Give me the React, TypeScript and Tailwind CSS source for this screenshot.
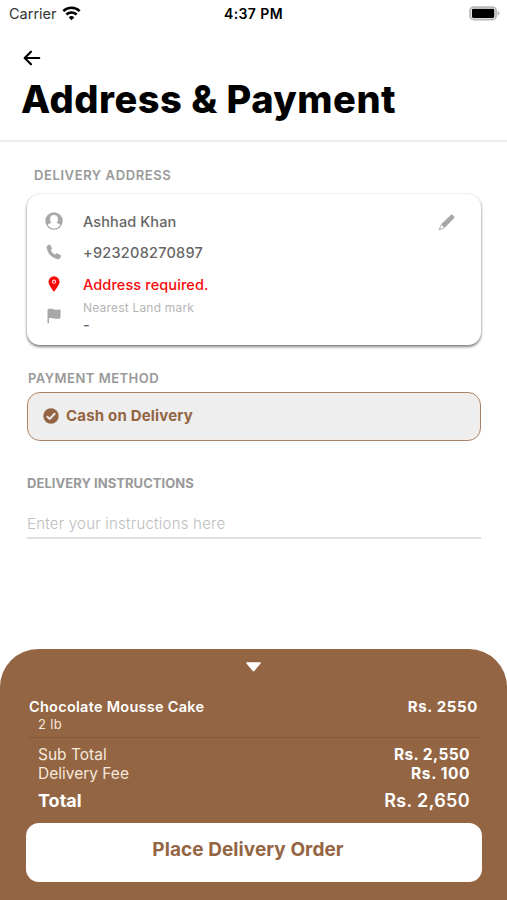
import React from "react";

function WifiIcon() {
  return (
    <svg width="19" height="15" viewBox="0 0 19 15" fill="none" stroke="#000" strokeWidth="2.5">
      <path d="M1.3 5.200a11.6 11.6 0 0 1 16.4 0" />
      <path d="M4.4 8.500a7.2 7.2 0 0 1 10.2 0" />
      <path d="M9.5 14.2 6.700 11.300a4 4 0 0 1 5.600 0z" fill="#000" stroke="none" />
    </svg>
  );
}

function BatteryIcon() {
  return (
    <svg width="31" height="15" viewBox="0 0 31 15">
      <rect x="1.100" y="1.100" width="26" height="12.400" rx="3.600" fill="#fff" stroke="#b8b8b8" strokeWidth="1.800" />
      <rect x="2.900" y="2.700" width="22.400" height="9.200" rx="1.400" fill="#000" />
      <path d="M28.600 5.100c1.400.5 1.900 1.300 1.900 2.200s-.5 1.700-1.900 2.200z" fill="#b5b5b5" />
    </svg>
  );
}

function BackIcon() {
  return (
    <svg width="18" height="16" viewBox="0 0 18 16" fill="none" stroke="#000" strokeWidth="2.200" strokeLinecap="round" strokeLinejoin="round">
      <path d="M8 1.700 1.700 8 8 14.300M2 8h14.200" />
    </svg>
  );
}

function ContactIcon() {
  return (
    <svg width="18" height="18" viewBox="0 0 18 18">
      <circle cx="9" cy="9" r="8.700" fill="#a8a8a8" />
      <ellipse cx="9" cy="7.300" rx="3.900" ry="4.300" fill="#fff" />
      <path d="M2.700 13c1.200-1.400 2.800-1.700 4.300-2.400h4c1.500.7 3.100 1 4.300 2.400A7.400 7.400 0 0 1 9 16.400 7.400 7.400 0 0 1 2.700 13z" fill="#fff" />
    </svg>
  );
}

function PhoneIcon() {
  return (
    <svg width="16" height="16" viewBox="0 0 16 16" fill="#a8a8a8">
      <path d="M1.100 1.900 3.100.6c.5-.3 1.100-.1 1.300.4l1.500 3.100c.2.500.1.900-.3 1.300l-.9.900c1 1.900 2.400 3.300 4.300 4.300l.9-.9c.4-.4.8-.5 1.300-.3l3.300 1.500c.5.300.8.900.5 1.400L14 14.600c-.3.500-.8.800-1.300.7C6.300 14.700 1.300 9.600.6 3.300c-.1-.6.100-1.100.5-1.400z" />
    </svg>
  );
}

function PinIcon() {
  return (
    <svg width="12" height="16" viewBox="0 0 12 16">
      <path d="M6 .3A5.500 5.500 0 0 0 .5 5.800C.5 9.500 6 15.700 6 15.700s5.500-6.200 5.500-9.900A5.500 5.500 0 0 0 6 .3z" fill="#f80808" />
      <circle cx="6" cy="5.700" r="1.600" fill="none" stroke="#ffd5d5" strokeWidth="1.100" />
    </svg>
  );
}

function FlagIcon() {
  return (
    <svg width="14" height="16" viewBox="0 0 14 16" fill="#a8a8a8">
      <path d="M.5 15.300V1.200C3 .2 4.800.6 7 1.400c2.200.7 4 .5 6.500-.1v8.900c-2.500.8-4.400.8-6.500.2-2-.6-3.500-.7-5-.2v5.100z" />
    </svg>
  );
}

function PencilIcon() {
  return (
    <svg width="17" height="17" viewBox="0 0 17 17" fill="#a8a8a8">
      <path d="M12.700.9c.6-.6 1.300-.6 1.900 0l1.500 1.500c.6.600.6 1.200 0 1.800L6.500 13.900 2.900 10.400z" />
      <path d="M2.500 11 .6 16.300 6 14.400l-.8-.6-2.200 1-.8-.9 1-2.100z" />
    </svg>
  );
}

function CheckIcon() {
  return (
    <svg width="16" height="16" viewBox="0 0 16 16" fill="none">
      <circle cx="8" cy="8" r="7.700" fill="#936543" />
      <path d="m3.800 8.200 2.900 2.700 5.400-5.600" stroke="#eee" strokeWidth="2" />
    </svg>
  );
}

function ContactRow({ icon, className, children }: { icon: React.ReactNode; className: string; children: React.ReactNode }) {
  return (
    <div className={`flex items-center ${className}`}>
      <span className="flex w-[38px] shrink-0 justify-start pb-px">
        <span className="flex w-[18px] justify-center">{icon}</span>
      </span>
      {children}
    </div>
  );
}

export default function App() {
  return (
    <main className="flex h-[900px] w-[507px] flex-col overflow-hidden whitespace-nowrap bg-white font-['Inter','Liberation_Sans',sans-serif]">
      <header className="h-[142px] shrink-0 border-b-2 border-[#ececec]">
        <div className="grid h-[28px] grid-cols-3 items-center pl-[9px] pr-[7px]">
          <div className="flex items-center gap-[5px] text-[14.5px] text-[#333]">
            <span>Carrier</span>
            <span className="-mt-[2px]"><WifiIcon /></span>
          </div>
          <span className="pb-[2px] pr-[2px] text-center text-[14px] font-semibold tracking-[0.4px]">4:37 PM</span>
          <span className="-mt-[2px] flex justify-end"><BatteryIcon /></span>
        </div>
        <div className="flex h-[44px] items-end pb-[6px] pl-[23px]"><BackIcon /></div>
        <h1 className="pl-[21px] text-[38px] font-extrabold leading-[54px] tracking-[0.52px]">Address &amp; Payment</h1>
      </header>

      <section className="h-[507px] shrink-0 pl-[27px] pr-[26px] pt-[23px]">
        <h2 className="pl-[7px] text-[13px] font-semibold leading-[20px] tracking-[0.6px] text-[#999]">DELIVERY ADDRESS</h2>
        <div className="mt-[9px] flex h-[151px] justify-between rounded-[13px] pl-[18px] pr-[26px] pt-[12px] shadow-[0_2px_3px_rgba(0,0,0,0.48),0_0_2px_rgba(0,0,0,0.16)]">
          <div className="text-[14.5px] font-medium tracking-[0.1px] text-[#666]">
            <ContactRow icon={<ContactIcon />} className="h-[31px]">Ashhad Khan</ContactRow>
            <ContactRow icon={<PhoneIcon />} className="h-[31px] tracking-[0.25px]">+923208270897</ContactRow>
            <ContactRow icon={<PinIcon />} className="h-[33px] text-[#f80808]">Address required.</ContactRow>
            <ContactRow icon={<FlagIcon />} className="h-[30px]">
              <div className="flex flex-col">
                <span className="text-[12px] font-normal leading-[16px] tracking-[0.2px] text-[#b5b5b5]">Nearest Land mark</span>
                <span className="leading-[17px]">-</span>
              </div>
            </ContactRow>
          </div>
          <span className="pt-[8px]"><PencilIcon /></span>
        </div>

        <h2 className="mt-[23px] pl-px text-[13px] font-semibold leading-[20px] tracking-[0.5px] text-[#999]">PAYMENT METHOD</h2>
        <div className="mt-[4px] flex h-[49px] items-center gap-[7px] rounded-[13px] border border-[#a98368] bg-[#eee] pb-[2px] pl-[15px] text-[15px] font-bold tracking-[0.18px] text-[#936543] shadow-[inset_0_0_0_1px_#f8eee6]">
          <CheckIcon />
          <span className="pt-[2px]">Cash on Delivery</span>
        </div>

        <h2 className="mt-[32px] text-[13px] font-bold leading-[20px] tracking-[0.05px] text-[#999]">DELIVERY INSTRUCTIONS</h2>
        <div className="mt-[16px] h-[30px] border-b-2 border-[#e0e0e0] text-[15px] font-light leading-[29px] tracking-[0.23px] text-[#bdbdbd]">Enter your instructions here</div>
      </section>

      <footer className="flex h-[251px] shrink-0 flex-col rounded-t-[38px] bg-[#936543] pl-[26px] pr-[25px] text-white">
        <div className="flex h-[48px] justify-center pr-[2px] pt-[13px]">
          <svg width="15" height="10" viewBox="0 0 15 10"><path d="M1 .2h13c.8 0 1.100.8.600 1.300L8.300 9.100c-.5.500-1.100.5-1.600 0L.4 1.500C-.1 1 .2.2 1 .2z" fill="#fff" /></svg>
        </div>
        <div className="mx-[2px] h-[41px] border-b border-[#875b3a] px-px">
          <div className="flex justify-between pr-px text-[14.5px] font-semibold leading-[20px] tracking-[0.27px]">
            <span>Chocolate Mousse Cake</span><span className="text-[15px] font-bold tracking-[0.65px]">Rs. 2550</span>
          </div>
          <div className="-mt-px pl-[9px] text-[13px] leading-[16px] tracking-[0.3px] text-[#f7e8dc]">2 lb</div>
        </div>
        <div className="h-[85px] px-[12px] pt-[7px]">
          <div className="flex justify-between text-[15.5px] leading-[19px] text-[#f7e8dc]"><span>Sub Total</span><span className="font-bold tracking-[0.42px] text-white">Rs. 2,550</span></div>
          <div className="flex justify-between text-[15.5px] leading-[19px] text-[#f7e8dc]"><span>Delivery Fee</span><span className="font-bold tracking-[0.58px] text-white">Rs. 100</span></div>
          <div className="mt-[5px] flex justify-between text-[18px] font-semibold leading-[26px]"><span className="font-bold">Total</span><span className="tracking-[0.35px]">Rs. 2,650</span></div>
        </div>
        <button className="h-[59px] rounded-[13px] bg-white pb-[5px] pl-0 pr-[12px] text-[19px] font-bold tracking-[0.06px] text-[#936543]">Place Delivery Order</button>
      </footer>
    </main>
  );
}
